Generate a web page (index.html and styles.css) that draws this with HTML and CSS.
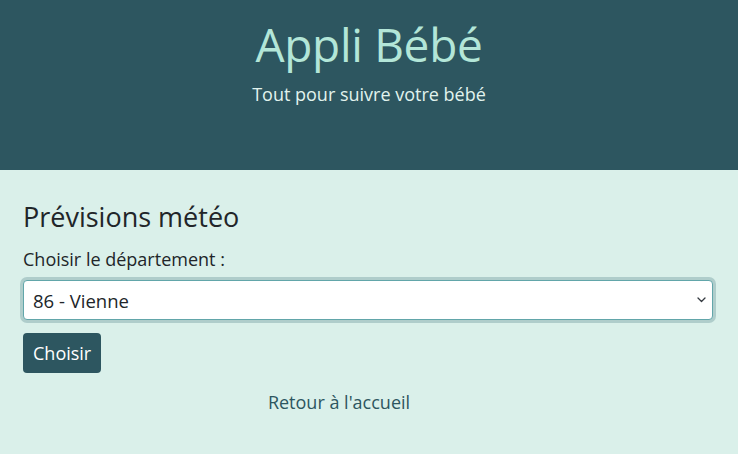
FILE: index.html
```html
<!DOCTYPE html>
<html lang="fr">
<head>
<meta charset="utf-8">
<title>Appli Bébé</title>
<link rel="stylesheet" href="styles.css">
</head>
<body>
<header class="hero">
  <h1 class="hero-title">Appli Bébé</h1>
  <p class="hero-sub">Tout pour suivre votre bébé</p>
</header>
<main class="content">
  <h2 class="page-title">Prévisions météo</h2>
  <form class="form">
    <label class="label" for="dep">Choisir le département :</label>
    <div class="select-wrap">
      <select id="dep" class="select">
        <option>86 - Vienne</option>
      </select>
      <svg class="chev" width="9" height="6" viewBox="0 0 9 6"><path d="M1 1 L4.5 4.5 L8 1" fill="none" stroke="#343a40" stroke-width="1.3" stroke-linecap="round" stroke-linejoin="round"/></svg>
    </div>
    <button type="button" class="btn">Choisir</button>
  </form>
  <div class="back"><a href="#" class="back-link">Retour à l'accueil</a></div>
</main>
</body>
</html>
```
FILE: styles.css
```css
* { box-sizing: border-box; }
html, body { margin: 0; padding: 0; }
body {
  background: #daf0ea;
  font-family: "Open Sans", "Noto Sans", sans-serif;
  color: #212529;
  height: 454px;
}
.hero {
  background: #2d5660;
  height: 170px;
  text-align: center;
  padding-top: 13px;
}
.hero-title {
  margin: 0;
  font-size: 46px;
  font-weight: 400;
  color: #b3e6d8;
  line-height: 62px;
  letter-spacing: -0.3px;
}
.hero-sub {
  margin: 0;
  font-size: 18px;
  color: #e1f3ee;
  line-height: 26px;
  margin-top: 6px;
}
.content {
  padding: 30px 25px 0 23px;
}
.page-title {
  margin: 0 0 12px 0;
  font-size: 27px;
  font-weight: 400;
  line-height: 34px;
}
.label {
  display: block;
  font-size: 18px;
  line-height: 26px;
  margin-bottom: 8px;
}
.select-wrap {
  position: relative;
}
.select {
  display: block;
  width: 100%;
  height: 40px;
  appearance: none;
  -webkit-appearance: none;
  background: #fff;
  border: 1px solid #62a6aa;
  border-radius: 4px;
  box-shadow: 0 0 0 3px #afcdcb;
  padding: 0 30px 0 9px;
  font-family: inherit;
  font-size: 18.5px;
  color: #212529;
  outline: none;
}
.chev {
  position: absolute;
  right: 7px;
  top: 17px;
}
.btn {
  margin-top: 13px;
  height: 40px;
  padding: 0 10px;
  background: #2d5660;
  color: #fff;
  border: none;
  border-radius: 4px;
  font-family: inherit;
  font-size: 18px;
}
.back {
  text-align: center;
  padding-right: 58px;
  margin-top: 16px;
}
.back-link {
  color: #2d5660;
  text-decoration: none;
  font-size: 18px;
  line-height: 26px;
}
```
